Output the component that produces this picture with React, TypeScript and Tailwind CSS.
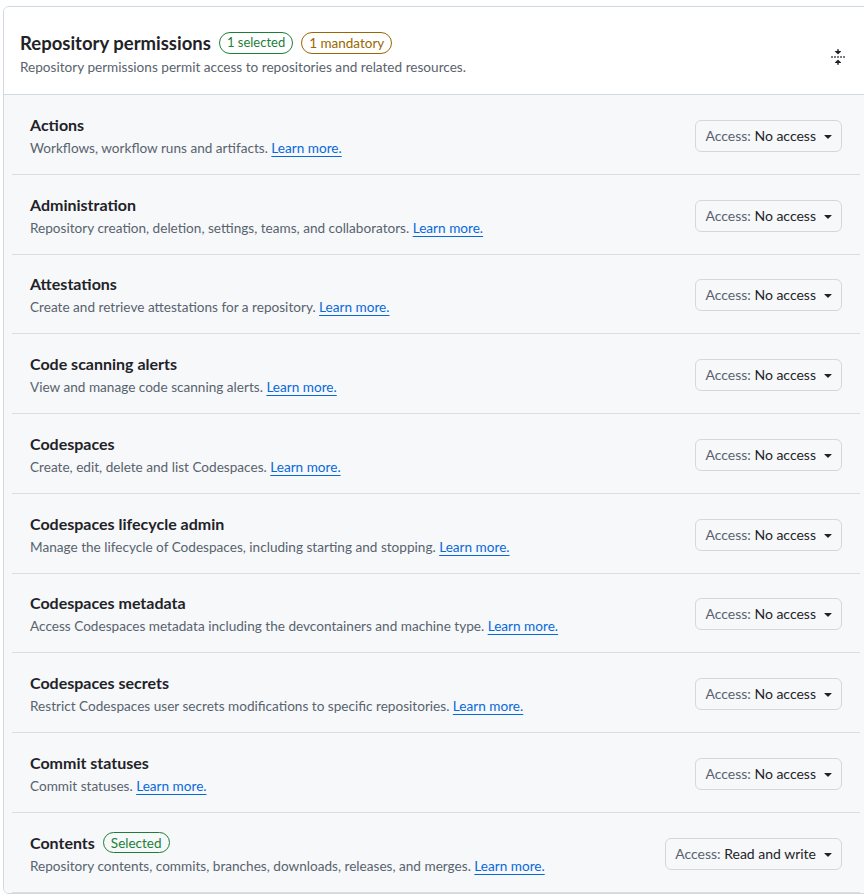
import React from 'react';

const ROWS = [
  { name: 'Actions', desc: 'Workflows, workflow runs and artifacts.', access: 'No access' },
  { name: 'Administration', desc: 'Repository creation, deletion, settings, teams, and collaborators.', access: 'No access' },
  { name: 'Attestations', desc: 'Create and retrieve attestations for a repository.', access: 'No access' },
  { name: 'Code scanning alerts', desc: 'View and manage code scanning alerts.', access: 'No access' },
  { name: 'Codespaces', desc: 'Create, edit, delete and list Codespaces.', access: 'No access' },
  { name: 'Codespaces lifecycle admin', desc: 'Manage the lifecycle of Codespaces, including starting and stopping.', access: 'No access' },
  { name: 'Codespaces metadata', desc: 'Access Codespaces metadata including the devcontainers and machine type.', access: 'No access' },
  { name: 'Codespaces secrets', desc: 'Restrict Codespaces user secrets modifications to specific repositories.', access: 'No access' },
  { name: 'Commit statuses', desc: 'Commit statuses.', access: 'No access' },
  { name: 'Contents', desc: 'Repository contents, commits, branches, downloads, releases, and merges.', access: 'Read and write', selected: true },
];

const FoldIcon = () => (
  <svg width="16" height="16" viewBox="0 0 16 16" fill="#1f2328">
    <path d="M10.896 2H8.75V.75a.75.75 0 0 0-1.5 0V2H5.104a.25.25 0 0 0-.177.427l2.896 2.896a.25.25 0 0 0 .354 0l2.896-2.896A.25.25 0 0 0 10.896 2ZM8.75 15.25a.75.75 0 0 1-1.5 0V14H5.104a.25.25 0 0 1-.177-.427l2.896-2.896a.25.25 0 0 1 .354 0l2.896 2.896a.25.25 0 0 1-.177.427H8.75v1.25Zm-6.5-6.5a.75.75 0 0 0 0-1.5h-.5a.75.75 0 0 0 0 1.5h.5ZM6 8a.75.75 0 0 1-.75.75h-.5a.75.75 0 0 1 0-1.5h.5A.75.75 0 0 1 6 8Zm2.25.75a.75.75 0 0 0 0-1.5h-.5a.75.75 0 0 0 0 1.5h.5ZM12 8a.75.75 0 0 1-.75.75h-.5a.75.75 0 0 1 0-1.5h.5A.75.75 0 0 1 12 8Zm2.25.75a.75.75 0 0 0 0-1.5h-.5a.75.75 0 0 0 0 1.5h.5Z" />
  </svg>
);

const CaretDown = () => (
  <svg width="16" height="16" viewBox="0 0 16 16" fill="#1f2328">
    <path d="m4.427 7.427 3.396 3.396a.25.25 0 0 0 .354 0l3.396-3.396A.25.25 0 0 0 11.396 7H4.604a.25.25 0 0 0-.177.427Z" />
  </svg>
);

export default function App() {
  return (
    <div className="w-[864px] h-[894px] overflow-hidden bg-white pt-[6px] pl-[3px] font-['Lato',sans-serif] text-[#1f2328]">
      <div className="w-[866px] border border-[#d1d9e0] rounded-md overflow-hidden">
        {/* header */}
        <div className="flex items-center justify-between bg-white pl-4 pr-[22px] pt-[24px] pb-[17px] border-b border-[#d1d9e0]">
          <div>
            <div className="flex items-center h-6">
              <h2 className="text-[18.5px] font-bold leading-6">Repository permissions</h2>
              <span className="ml-2 h-[22px] px-[7px] flex items-center rounded-full border border-[#1a7f37] text-[13px] text-[#1a7f37]">1 selected</span>
              <span className="ml-2 h-[22px] px-[7px] flex items-center rounded-full border border-[#9a6700] text-[13.5px] text-[#9a6700]">1 mandatory</span>
            </div>
            <p className="mt-[2px] text-[13.6px] leading-5 text-[#59636e]">Repository permissions permit access to repositories and related resources.</p>
          </div>
          <button className="mt-[6px]"><FoldIcon /></button>
        </div>

        {/* permission rows */}
        <div className="bg-[#f6f8fa] px-2">
          {ROWS.map(r => (
            <div key={r.name} className="h-[79.75px] flex items-center justify-between pl-[18px] pr-[18px] pt-[3px] border-b border-[#d8dee4]">
              <div className="flex flex-col gap-[2px]">
                <div className="flex items-center h-[22px]">
                  <span className="text-base font-bold leading-[22px]">{r.name}</span>
                  {r.selected && (
                    <span className="ml-2 h-[21px] px-[7px] flex items-center rounded-full border border-[#1a7f37] text-[13.5px] text-[#1a7f37]">Selected</span>
                  )}
                </div>
                <p className="text-[13.6px] leading-5 text-[#59636e]">
                  {r.desc}{' '}
                  <a href="#" className="text-[#0969da] underline underline-offset-[3px]">Learn more.</a>
                </p>
              </div>
              <button className="h-8 flex items-center gap-[4px] pl-[9px] pr-[5px] rounded-md border border-[#d1d9e0] bg-[#f6f8fa] text-sm">
                <span>
                  <span className="text-[#59636e]">Access: </span>
                  <span>{r.access}</span>
                </span>
                <CaretDown />
              </button>
            </div>
          ))}
        </div>
      </div>
    </div>
  );
}
